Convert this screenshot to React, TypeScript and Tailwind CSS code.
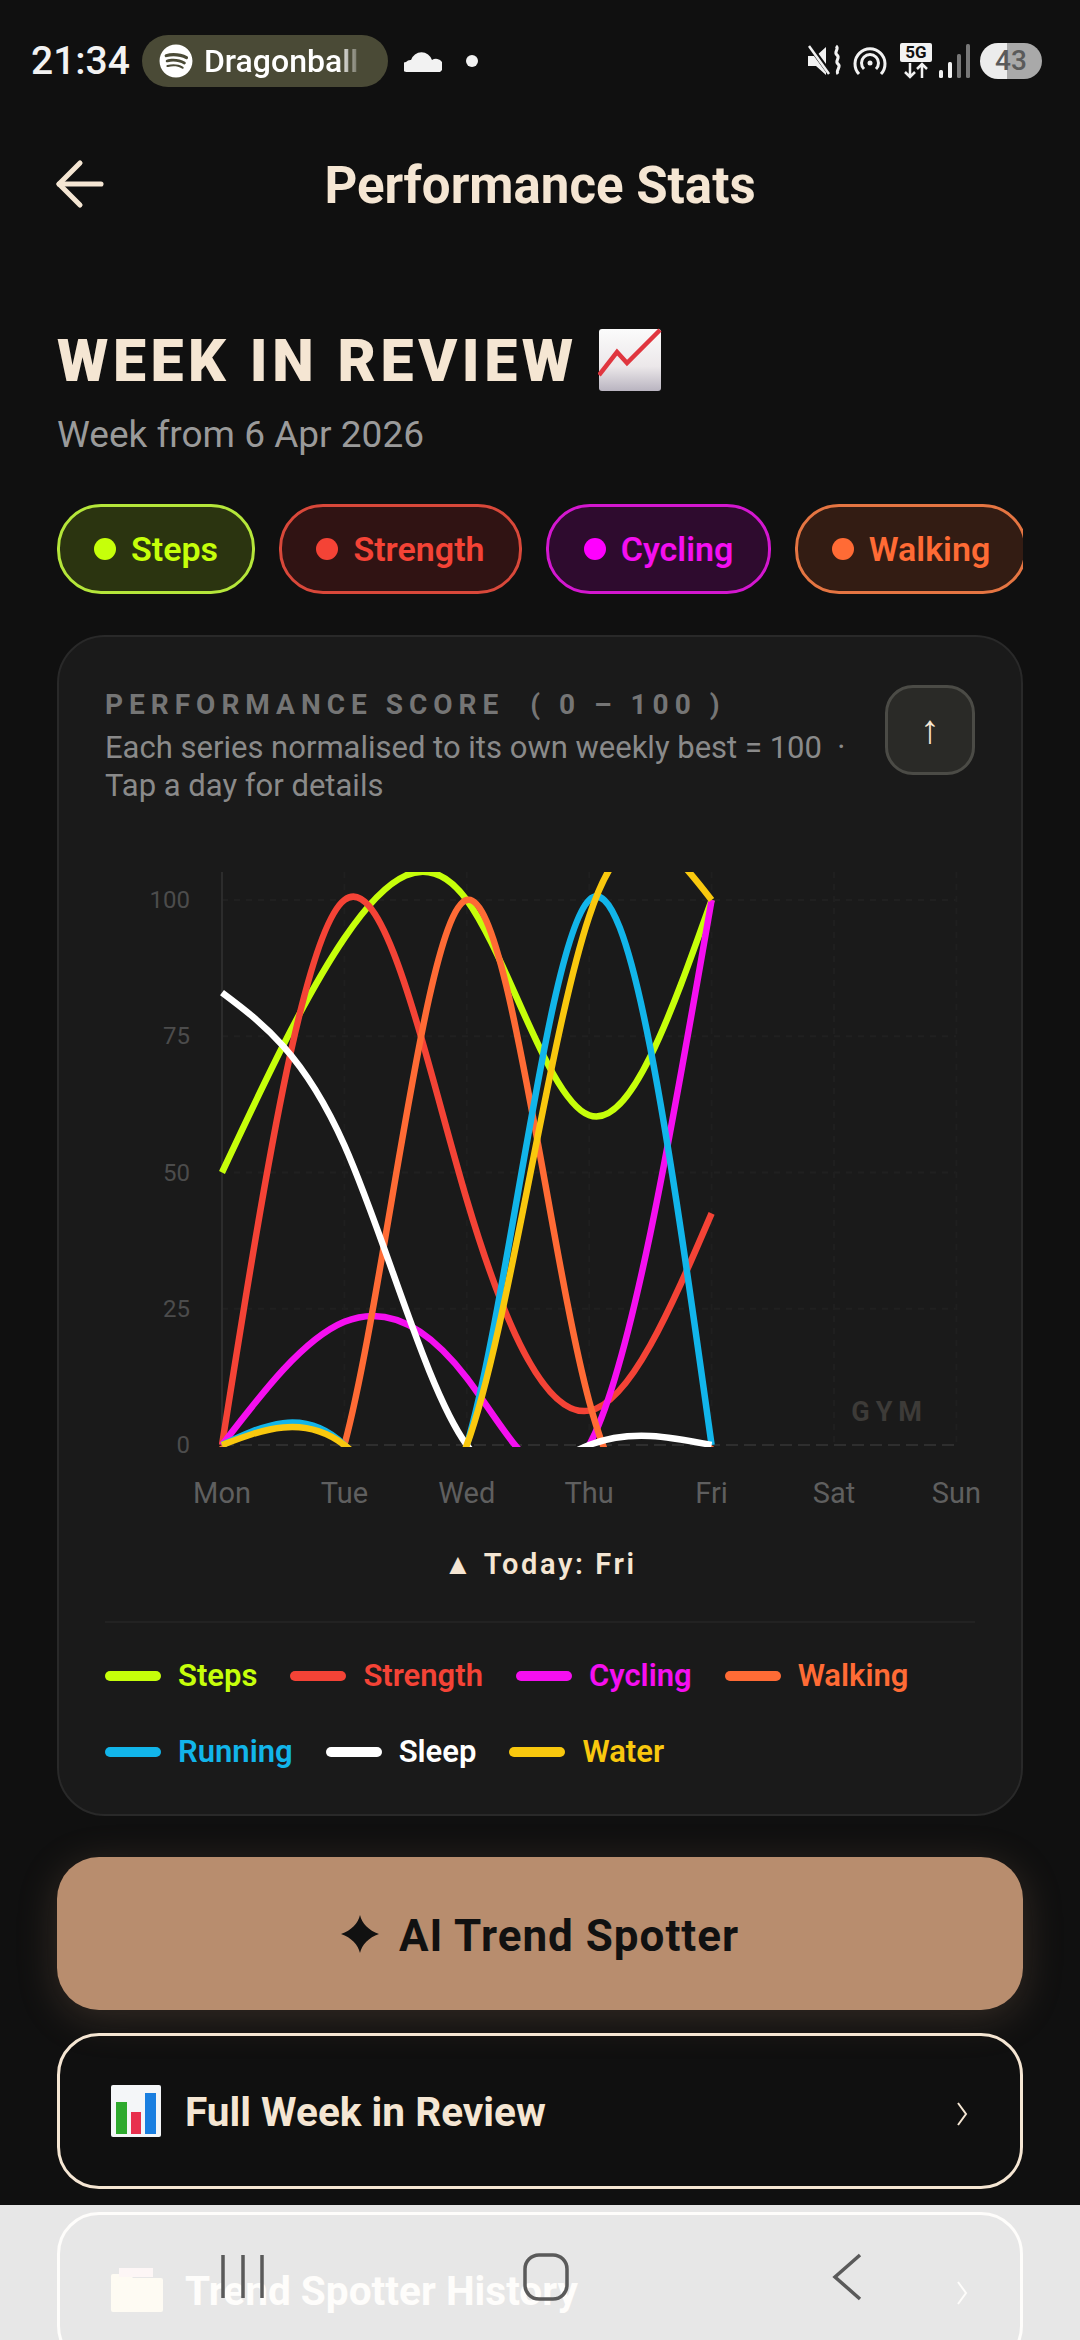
import { ArrowLeft } from "lucide-react";
import { FaSpotify } from "react-icons/fa";

const days = ["Mon", "Tue", "Wed", "Thu", "Fri", "Sat", "Sun"];
const ticks = [0, 25, 50, 75, 100];

const series = [
  { name: "Steps", color: "#c6ff0a", text: "text-[#c6ff0a]", swatch: "bg-[#c6ff0a]", values: [50, 93, 100, 60.5, 100] },
  { name: "Strength", color: "#f44336", text: "text-[#f44336]", swatch: "bg-[#f44336]", values: [0, 100, 45, 6.3, 42.5] },
  { name: "Cycling", color: "#f50ff0", text: "text-[#f50ff0]", swatch: "bg-[#f50ff0]", values: [0, 22.6, 12.3, 0, 100] },
  { name: "Walking", color: "#ff6b35", text: "text-[#ff6b35]", swatch: "bg-[#ff6b35]", values: [0, 0, 100, 8, 0] },
  { name: "Running", color: "#12b5ea", text: "text-[#12b5ea]", swatch: "bg-[#12b5ea]", values: [0, 0, 0, 100, 0] },
  { name: "Sleep", color: "#ffffff", text: "text-white", swatch: "bg-white", values: [83, 55, 0, 0, 0] },
  { name: "Water", color: "#f9c80e", text: "text-[#f9c80e]", swatch: "bg-[#f9c80e]", values: [0, 0, 0, 97, 100] },
];

const chips = [
  { name: "Steps", box: "border-[#b5e63a] bg-[#2b3410] w-[198px]", dot: "bg-[#c6ff0a]", text: "text-[#c6ff0a]" },
  { name: "Strength", box: "border-[#d9483a] bg-[#301313] w-[243px]", dot: "bg-[#f44336]", text: "text-[#f44336]" },
  { name: "Cycling", box: "border-[#d417d0] bg-[#2e0b2e] w-[225px]", dot: "bg-[#ff00ff]", text: "text-[#f50ff0]" },
  { name: "Walking", box: "border-[#e57542] bg-[#331c13] w-[232px]", dot: "bg-[#ff6b35]", text: "text-[#ff6b35]" },
];

const xAt = (i: number) => 222 + i * 122.4;
const yAt = (v: number) => 1445 - v * 5.45;

// natural cubic spline, same maths as the chart lib
function controlPoints(x: number[]) {
  const n = x.length - 1;
  const a = new Array(n).fill(0);
  const b = new Array(n).fill(0);
  const r = new Array(n).fill(0);
  a[0] = 0;
  b[0] = 2;
  r[0] = x[0] + 2 * x[1];
  for (let i = 1; i < n - 1; i++) {
    a[i] = 1;
    b[i] = 4;
    r[i] = 4 * x[i] + 2 * x[i + 1];
  }
  a[n - 1] = 2;
  b[n - 1] = 7;
  r[n - 1] = 8 * x[n - 1] + x[n];
  for (let i = 1; i < n; i++) {
    const m = a[i] / b[i - 1];
    b[i] -= m;
    r[i] -= m * r[i - 1];
  }
  a[n - 1] = r[n - 1] / b[n - 1];
  for (let i = n - 2; i >= 0; i--) a[i] = (r[i] - a[i + 1]) / b[i];
  b[n - 1] = (x[n] + a[n - 1]) / 2;
  for (let i = 0; i < n - 1; i++) b[i] = 2 * x[i + 1] - a[i + 1];
  return [a, b];
}

function linePath(values: number[]) {
  const xs = values.map((_, i) => xAt(i));
  const ys = values.map(yAt);
  const [xa, xb] = controlPoints(xs);
  const [ya, yb] = controlPoints(ys);
  let d = `M${xs[0]} ${ys[0]}`;
  for (let i = 0; i < xs.length - 1; i++) {
    d += `C${xa[i]} ${ya[i]} ${xb[i]} ${yb[i]} ${xs[i + 1]} ${ys[i + 1]}`;
  }
  return d;
}

function Chart() {
  return (
    <svg viewBox="105 850 870 670" className="block w-[870px] h-[670px] overflow-visible">
      <defs>
        <clipPath id="plot">
          <rect x="219" y="872" width="760" height="575" />
        </clipPath>
      </defs>
      {ticks.slice(1).map((t) => (
        <line key={t} x1="222" x2="956" y1={yAt(t)} y2={yAt(t)} stroke="#202020" strokeWidth="2" strokeDasharray="6 6" />
      ))}
      {days.slice(1).map((d, i) => (
        <line key={d} x1={xAt(i + 1)} x2={xAt(i + 1)} y1="872" y2="1445" stroke="#1f1f1f" strokeWidth="2" strokeDasharray="6 6" />
      ))}
      <line x1="222" x2="222" y1="872" y2="1445" stroke="#2c2c2c" strokeWidth="2" />
      <line x1="222" x2="956" y1="1445" y2="1445" stroke="#2e2e2e" strokeWidth="2" strokeDasharray="12 6" />
      <text x="928" y="1421" textAnchor="end" fontSize="27" fontWeight="700" letterSpacing="6" fill="#3d3b38" fontFamily="Roboto, sans-serif">
        GYM
      </text>
      {ticks.map((t) => (
        <text key={t} x="190" y={yAt(t) + 8} textAnchor="end" fontSize="24" fill="#4c4c4c" fontFamily="Roboto, sans-serif">
          {t}
        </text>
      ))}
      {days.map((d, i) => (
        <text key={d} x={xAt(i)} y="1503" textAnchor="middle" fontSize="29" fill="#5f5f5f" fontFamily="Roboto, sans-serif">
          {d}
        </text>
      ))}
      <g clipPath="url(#plot)">
        {series.map((s) => (
          <path key={s.name} d={linePath(s.values)} fill="none" stroke={s.color} strokeWidth="6.5" />
        ))}
      </g>
    </svg>
  );
}

function TrendEmoji() {
  return (
    <svg viewBox="0 0 64 64" className="w-[64px] h-[64px]">
      <defs>
        <linearGradient id="paper" x1="0" y1="0" x2="0" y2="1">
          <stop offset="0" stopColor="#fbfbfb" />
          <stop offset="0.6" stopColor="#ece8ea" />
          <stop offset="1" stopColor="#b9b4c0" />
        </linearGradient>
      </defs>
      <rect x="1" y="1" width="62" height="62" rx="3" fill="url(#paper)" />
      <path d="M1 47 L19 24 L29 35 L62 2" fill="none" stroke="#e0363f" strokeWidth="4.5" />
    </svg>
  );
}

function BarsEmoji() {
  return (
    <svg viewBox="0 0 50 52" className="w-[50px] h-[52px] shrink-0">
      <rect width="50" height="52" rx="2" fill="#f4f6f8" />
      <rect x="5" y="17" width="11" height="32" fill="#2eaa2e" />
      <rect x="20" y="27" width="10" height="22" fill="#e8304e" />
      <rect x="34" y="8" width="11" height="41" fill="#1a7fe0" />
    </svg>
  );
}

function FolderEmoji() {
  return (
    <svg viewBox="0 0 52 44" className="w-[52px] h-[44px] shrink-0">
      <path d="M2 6h16l4 4h28a2 2 0 0 1 2 2v30a2 2 0 0 1-2 2H2a2 2 0 0 1-2-2V8a2 2 0 0 1 2-2z" fill="#f5d98a" />
      <rect x="8" y="0" width="34" height="9" fill="#e8a0a0" />
    </svg>
  );
}

function Chevron() {
  return (
    <svg viewBox="0 0 12 24" className="ml-auto mt-[6px] w-[12px] h-[24px]" fill="none" stroke="#f5e6d3" strokeWidth="2">
      <path d="M2 1l8 11-8 11" />
    </svg>
  );
}

function StatusIcons() {
  return (
    <div className="flex items-center">
      <svg viewBox="0 0 36 36" className="w-[36px] h-[36px]">
        <path d="M1 13h8l10-9v28l-10-9H1z" fill="#f2f2f2" />
        <path d="M2 2l22 30" stroke="#111" strokeWidth="5" />
        <path d="M2 3l20 28" stroke="#f2f2f2" strokeWidth="2.5" />
        <path d="M29 3c4 3-3 6 1 9s-3 6 1 9-3 6 0 10" fill="none" stroke="#f2f2f2" strokeWidth="3" />
      </svg>
      <svg viewBox="0 0 36 36" className="w-[36px] h-[36px] ml-[9px]" fill="none" stroke="#f2f2f2" strokeWidth="3">
        <path d="M7 31a15 15 0 1 1 22 0" />
        <path d="M12 26a8.5 8.5 0 1 1 12 0" />
        <circle cx="18" cy="20" r="2.5" fill="#f2f2f2" stroke="none" />
      </svg>
      <div className="ml-[12px] flex flex-col items-center w-[32px]">
        <div className="w-[32px] h-[19px] rounded-[2px] bg-[#f2f2f2] flex items-center justify-center text-[17px] leading-none font-bold text-[#111]">
          5G
        </div>
        <svg viewBox="0 0 32 17" className="w-[32px] h-[17px]" fill="none" stroke="#f2f2f2" strokeWidth="2.5">
          <path d="M10 1v14M5 10l5 5 5-5M22 16V2M17 7l5-5 5 5" />
        </svg>
      </div>
      <svg viewBox="0 0 32 36" className="w-[32px] h-[36px] ml-[6px]">
        <rect x="1" y="27" width="4" height="8" rx="1.5" fill="#f2f2f2" />
        <rect x="10" y="19" width="4" height="16" rx="1.5" fill="#f2f2f2" />
        <rect x="19" y="11" width="4" height="24" rx="1.5" fill="#777" />
        <rect x="28" y="1" width="4" height="34" rx="1.5" fill="#777" />
      </svg>
      <div className="ml-[10px] w-[62px] h-[36px] rounded-full bg-[linear-gradient(90deg,#ececec_44%,#a9a9a9_44%)] flex items-center justify-center text-[28px] font-medium text-[#5a5a5a]">
        43
      </div>
    </div>
  );
}

export default function App() {
  return (
    <div className="relative w-[1080px] h-[2340px] overflow-hidden bg-[#101010] font-['Roboto',sans-serif]">
      {/* status bar */}
      <div className="flex items-center justify-between h-[122px] pl-[31px] pr-[38px]">
        <div className="flex items-center">
          <span className="text-[39px] font-medium text-[#f2f2f2]">21:34</span>
          <div className="ml-[12px] flex items-center w-[246px] h-[52px] rounded-full bg-[#4a4a36] pl-[17px]">
            <FaSpotify className="text-[34px] text-white" />
            <span className="ml-[11px] w-[160px] overflow-hidden whitespace-nowrap text-[32px] font-medium text-white [mask-image:linear-gradient(90deg,#000_84%,transparent)]">
              Dragonball
            </span>
          </div>
          <svg viewBox="0 0 38 24" className="ml-[16px] w-[38px] h-[24px]">
            <path d="M3 23a5 5 0 0 1-1-10 6 6 0 0 1 5-2 11 11 0 0 1 21 0 6 6 0 0 1 8 12z" fill="#f2f2f2" />
          </svg>
          <div className="ml-[24px] w-[12px] h-[12px] rounded-full bg-[#f2f2f2]" />
        </div>
        <StatusIcons />
      </div>

      {/* header */}
      <div className="relative flex items-center justify-center h-[124px]">
        <ArrowLeft className="absolute left-[44px] w-[72px] h-[72px] text-[#f5e6d3]" strokeWidth={1.7} />
        <h2 className="mt-[4px] text-[51px] font-bold text-[#f5e6d3]">Performance Stats</h2>
      </div>

      <div className="px-[57px]">
        <div className="mt-[82px] flex items-center h-[64px]">
          <h1 className="text-[59px] font-black tracking-[4.6px] text-[#f5e6d3] leading-none">WEEK IN REVIEW</h1>
          <span className="ml-[20px]">
            <TrendEmoji />
          </span>
        </div>
        <p className="mt-[21px] text-[37px] leading-[44px] text-[#9a9a9a]">Week from 6 Apr 2026</p>

        {/* filter chips */}
        <div className="mt-[47px] flex gap-[24px] overflow-hidden">
          {chips.map((c) => (
            <div key={c.name} className={`flex items-center justify-center shrink-0 h-[90px] gap-[15px] rounded-[44px] border-[3px] ${c.box}`}>
              <span className={`w-[22px] h-[22px] rounded-full ${c.dot}`} />
              <span className={`text-[34px] font-semibold ${c.text}`}>{c.name}</span>
            </div>
          ))}
        </div>

        {/* chart card */}
        <div className="mt-[41px] h-[1181px] rounded-[48px] border-2 border-[#292929] bg-[#1a1a1a] px-[46px] pt-[48px]">
          <div className="flex justify-between h-[165px]">
            <div className="w-[760px]">
              <p className="mt-[3px] text-[28px] leading-[34px] font-bold tracking-[6px] text-[#757575] whitespace-pre">PERFORMANCE SCORE  ( 0 – 100 )</p>
              <p className="mt-[7px] text-[31px] leading-[38px] text-[#8a8a8a]">Each series normalised to its own weekly best = 100 &nbsp;· Tap a day for details</p>
            </div>
            <div className="flex items-center justify-center w-[90px] h-[90px] rounded-[28px] border-[3px] border-[#4b4b46] bg-[#2a2a27] text-[40px] font-medium text-[#f5e6d3]">↑</div>
          </div>
          <Chart />
          <p className="mt-[27px] text-center text-[29px] leading-[34px] font-semibold tracking-[2.6px] text-[#f5e6d3]">▲ Today: Fri</p>
          <div className="mt-[40px] h-[2px] bg-[#222]" />
          <div className="mt-[35px] flex flex-wrap gap-x-[33px] gap-y-[40px] w-[850px]">
            {series.map((s) => (
              <div key={s.name} className="flex items-center gap-[17px] h-[36px]">
                <span className={`w-[56px] h-[10px] rounded-full ${s.swatch}`} />
                <span className={`text-[31px] font-semibold ${s.text}`}>{s.name}</span>
              </div>
            ))}
          </div>
        </div>

        {/* actions */}
        <div className="mt-[41px] flex items-center justify-center gap-[20px] h-[153px] rounded-[42px] bg-[#b88d6e] shadow-[0_8px_40px_rgba(184,141,110,0.22)] text-[#111]">
          <svg viewBox="0 0 40 40" className="w-[38px] h-[40px]">
            <path d="M20 0C22 9 29 16 40 20 29 24 22 31 20 40 18 31 11 24 0 20 11 16 18 9 20 0z" fill="#111" />
          </svg>
          <span className="mt-[4px] text-[44px] font-bold tracking-[1px]">AI Trend Spotter</span>
        </div>
        <div className="mt-[23px] flex items-center h-[156px] rounded-[42px] border-[3px] border-[#f5e6d3] pl-[51px] pr-[52px]">
          <BarsEmoji />
          <span className="ml-[24px] mt-[3px] text-[40.6px] font-bold text-[#f5e6d3]">Full Week in Review</span>
          <Chevron />
        </div>
        <div className="mt-[23px] flex items-center h-[156px] rounded-[42px] border-[3px] border-[#f5e6d3] pl-[51px] pr-[52px]">
          <FolderEmoji />
          <span className="ml-[22px] mt-[3px] text-[40.6px] font-bold text-[#f5e6d3]">Trend Spotter History</span>
          <Chevron />
        </div>
      </div>

      {/* system nav, sits over the page */}
      <div className="absolute left-0 right-0 bottom-0 h-[135px] bg-white/90">
        <svg viewBox="0 0 1080 135" className="w-[1080px] h-[135px]" fill="none" stroke="#5a5a5a" strokeWidth="3.5">
          <path d="M223 50v43M243 50v43M262 50v43" />
          <rect x="525" y="50" width="42" height="44" rx="14" />
          <path d="M860 50l-25 22 25 22" />
        </svg>
      </div>
    </div>
  );
}
